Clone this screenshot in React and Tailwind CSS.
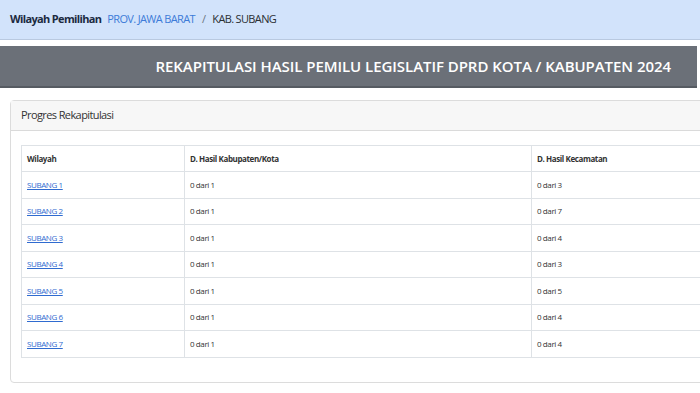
const rows = [
  { name: "SUBANG 1", kab: "0 dari 1", kec: "0 dari 3" },
  { name: "SUBANG 2", kab: "0 dari 1", kec: "0 dari 7" },
  { name: "SUBANG 3", kab: "0 dari 1", kec: "0 dari 4" },
  { name: "SUBANG 4", kab: "0 dari 1", kec: "0 dari 3" },
  { name: "SUBANG 5", kab: "0 dari 1", kec: "0 dari 5" },
  { name: "SUBANG 6", kab: "0 dari 1", kec: "0 dari 4" },
  { name: "SUBANG 7", kab: "0 dari 1", kec: "0 dari 4" },
];

const App = () => {
  return (
    <div
      className="w-[700px] h-[393px] overflow-hidden bg-white"
      style={{ fontFamily: '"Open Sans", "Noto Sans", sans-serif' }}
    >
      {/* breadcrumb */}
      <div className="h-[40px] bg-[#d2e3fb] border-b border-[#b9c9e0] flex items-center pl-[10px] text-[11px] tracking-[-0.65px]">
        <span className="font-bold text-[#1b2a41]">Wilayah Pemilihan</span>
        <span className="ml-[6px] text-[#3d7bd8]">PROV. JAWA BARAT</span>
        <span className="mx-[7px] text-[#6c757d]">/</span>
        <span className="text-[#2b2f33]">KAB. SUBANG</span>
      </div>

      {/* title banner */}
      <div className="mt-[6px] mr-[3px] h-[42px] bg-[#6b7078] border-b-2 border-[#565b62] flex items-center justify-end pr-[26px]">
        <h1 className="text-white font-semibold text-[15px] tracking-[-0.05px]">
          REKAPITULASI HASIL PEMILU LEGISLATIF DPRD KOTA / KABUPATEN 2024
        </h1>
      </div>

      {/* card */}
      <div className="mt-[12px] ml-[10px] w-[720px] border border-[#dcdcdc] rounded-[4px]">
        <div className="h-[30px] bg-[#f7f7f7] border-b border-[#dadada] flex items-center pl-[10px] text-[11px] text-[#333] tracking-[-0.6px]">
          Progres Rekapitulasi
        </div>
        <div className="pt-[14px] pl-[10px] pb-[24px]">
          <table className="w-[720px] border-collapse text-[8px] text-[#333] tracking-[-0.4px]">
            <thead>
              <tr className="h-[26px]">
                <th className="w-[163px] border border-[#dee2e6] text-left font-bold pl-[5px]">Wilayah</th>
                <th className="w-[347px] border border-[#dee2e6] text-left font-bold pl-[5px]">D. Hasil Kabupaten/Kota</th>
                <th className="border border-[#dee2e6] text-left font-bold pl-[5px]">D. Hasil Kecamatan</th>
              </tr>
            </thead>
            <tbody>
              {rows.map((r) => (
                <tr key={r.name} className="h-[26.5px]">
                  <td className="border border-[#dee2e6] pl-[5px]">
                    <a href="#" className="text-[#2f6bd0] underline">{r.name}</a>
                  </td>
                  <td className="border border-[#dee2e6] pl-[5px]">{r.kab}</td>
                  <td className="border border-[#dee2e6] pl-[5px]">{r.kec}</td>
                </tr>
              ))}
            </tbody>
          </table>
        </div>
      </div>
    </div>
  );
};

export default App;
